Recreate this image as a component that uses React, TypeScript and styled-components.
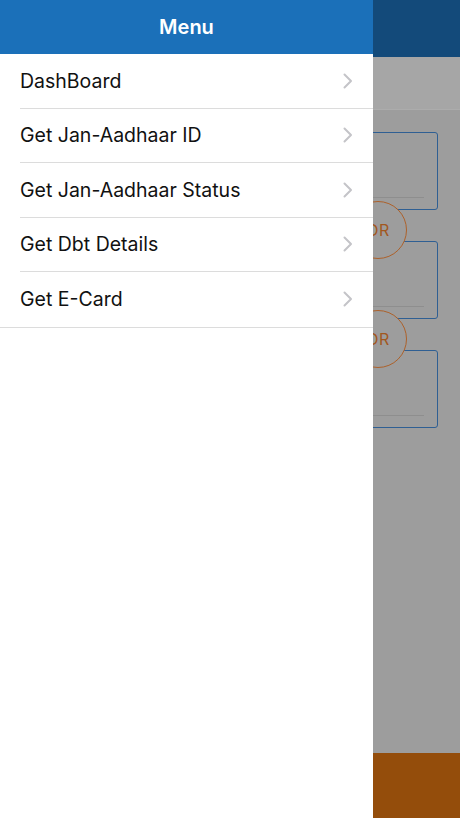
import * as React from 'react';
import styled, { createGlobalStyle } from 'styled-components';

const GlobalStyle = createGlobalStyle`
  *, *::before, *::after {
    box-sizing: border-box;
  }
  html, body {
    margin: 0;
    padding: 0;
    height: 100%;
    font-family: Inter, "Noto Sans", "Liberation Sans", sans-serif;
  }
  #root {
    height: 100%;
  }
`;

const Screen = styled.div`
  position: relative;
  width: 460px;
  height: 818px;
  overflow: hidden;
  background: #9d9d9d;
  display: flex;
  flex-direction: column;
`;

const NavBar = styled.div`
  height: 57px;
  flex-shrink: 0;
  background: #134a7a;
`;

const SubBar = styled.div`
  height: 53px;
  flex-shrink: 0;
  background: #a6a6a6;
  border-bottom: 1px solid #acacac;
`;

const Content = styled.div`
  flex: 1;
  display: flex;
  flex-direction: column;
  padding: 22px 22px 0 22px;
`;

const Card = styled.div`
  height: 78px;
  flex-shrink: 0;
  border: 1.5px solid #2f5f93;
  border-radius: 3px;
  display: flex;
  flex-direction: column;
  justify-content: flex-end;
  padding: 0 13px 11px 13px;
`;

const CardLine = styled.div`
  height: 1px;
  background: #8e8e8e;
`;

const OrRow = styled.div`
  height: 31px;
  flex-shrink: 0;
  position: relative;
`;

const OrBadge = styled.div`
  position: absolute;
  left: 327px;
  top: -9px;
  width: 58px;
  height: 58px;
  border-radius: 50%;
  border: 1.5px solid #ad612a;
  background: #9d9d9d;
  display: flex;
  align-items: center;
  justify-content: center;
  color: #a2581f;
  font-size: 16px;
  letter-spacing: 0.5px;
`;

const Spacer = styled.div`
  flex: 1;
`;

const BottomBar = styled.div`
  height: 65px;
  flex-shrink: 0;
  background: #944d0b;
`;

const Drawer = styled.nav`
  position: absolute;
  left: 0;
  top: 0;
  bottom: 0;
  width: 373px;
  background: #ffffff;
  display: flex;
  flex-direction: column;
`;

const DrawerHeader = styled.div`
  height: 54px;
  flex-shrink: 0;
  background: #1b70b9;
  color: #ffffff;
  font-size: 20px;
  font-weight: 600;
  display: flex;
  align-items: center;
  justify-content: center;
`;

const MenuList = styled.ul`
  list-style: none;
  margin: 0;
  padding: 0;
  border-bottom: 1px solid #dcdcdc;
`;

const MenuItem = styled.li<{ $last?: boolean }>`
  height: 54.5px;
  margin-left: 20px;
  padding-right: 20px;
  display: flex;
  align-items: center;
  justify-content: space-between;
  border-bottom: ${p => (p.$last ? 'none' : '1px solid #dcdcdc')};
  font-size: 19.5px;
  color: #111111;
`;

const Chevron = () => (
  <svg width="10" height="16" viewBox="0 0 10 16" fill="none">
    <path d="M1.5 1.5 L8 8 L1.5 14.5" stroke="#c4c4c8" strokeWidth="2" strokeLinecap="round" strokeLinejoin="round" />
  </svg>
);

const items = ['DashBoard', 'Get Jan-Aadhaar ID', 'Get Jan-Aadhaar Status', 'Get Dbt Details', 'Get E-Card'];

export default function App() {
  return (
    <>
      <GlobalStyle />
      <Screen>
        <NavBar />
        <SubBar />
        <Content>
          <Card><CardLine /></Card>
          <OrRow><OrBadge>OR</OrBadge></OrRow>
          <Card><CardLine /></Card>
          <OrRow><OrBadge>OR</OrBadge></OrRow>
          <Card><CardLine /></Card>
          <Spacer />
        </Content>
        <BottomBar />
        <Drawer>
          <DrawerHeader>Menu</DrawerHeader>
          <MenuList>
            {items.map((label, i) => (
              <MenuItem key={label} $last={i === items.length - 1}>
                {label}
                <Chevron />
              </MenuItem>
            ))}
          </MenuList>
        </Drawer>
      </Screen>
    </>
  );
}
